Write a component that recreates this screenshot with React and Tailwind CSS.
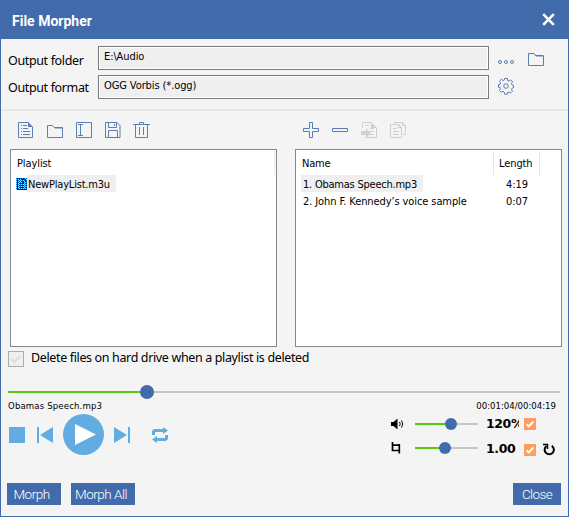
import React, { useState } from 'react';

const IconButton = ({ title, className = '', children }) => (
  <button title={title} className={`block shrink-0 ${className}`}>
    {children}
  </button>
);

const Svg = ({ w = 16, h = 16, color = '#5b7db5', children }) => (
  <svg
    width={w}
    height={h}
    viewBox={`0 0 ${w} ${h}`}
    fill="none"
    stroke={color}
    strokeWidth="1"
    className="block overflow-visible"
  >
    {children}
  </svg>
);

const FolderIcon = () => (
  <Svg w={16} h={14}>
    <path d="M.5 13.5V1.5h5.5l2 2.5h7.5v9.5zM6.5 2.5l1 1h8M8 3.500h7" />
  </Svg>
);

const ToolFolderIcon = () => (
  <Svg>
    <path d="M.5 15.5V3.5h5l2.5 2.5h7.5v9.5zM7 5.5h8.500v2" />
  </Svg>
);

const PlaylistIcon = () => (
  <Svg>
    <path d="M10.5 .5H.5v15h14V5" />
    <path d="M10 0l5 5h-5z" fill="#5b7db5" stroke="none" />
    <path d="M3 3.5h1M5 3.5h4M3 6.5h1M5 6.5h5M3 9.5h1M5 9.5h7M3 12.5h1M5 12.5h7" />
  </Svg>
);

const RenameIcon = () => (
  <Svg>
    <path d="M.5 .5h15v15H.5zM2 2.5h5M2 13.5h5M4.5 2.5v11" />
  </Svg>
);

const SaveIcon = () => (
  <Svg>
    <path d="M.5 .5h11.500l3 3v12H.5zM3.500 .5v5h8v-5M9.500 2v2M3.500 15.500v-7h9v7" />
  </Svg>
);

const TrashIcon = () => (
  <Svg w={17}>
    <path d="M0 2.5h17M6.5 2.500v-2h4v2M2.500 2.500v13h12v-13M6.500 5v8M10.500 5v8" />
  </Svg>
);

const PlusIcon = () => (
  <Svg>
    <path d="M6.500 .5h3v6h6v3h-6v6h-3v-6h-6v-3h6z" />
  </Svg>
);

const MinusIcon = () => (
  <Svg>
    <path d="M.5 6.500h15v3H.5z" />
  </Svg>
);

const ImportIcon = () => (
  <Svg color="#d0d0d0">
    <path d="M1.500 6V.5h9M4 15.500h11.500V5.500M4 3.500h4M9 6.500h4M9 9.500h4M9 12.500h4" />
    <path d="M10 0l6 6h-6z" fill="#d0d0d0" stroke="none" />
    <path d="M0 9h5V6l5 5-5 5v-3H0z" fill="#d0d0d0" stroke="none" />
  </Svg>
);

const CopyIcon = () => (
  <Svg color="#d0d0d0">
    <path d="M4.500 2V.5h8l3 3v9H13M12.500 .5v3h3M.5 2.500h8l3 3v10H.5zM8.500 2.500v3h3M3 6.500h4M3 9.500h6M3 12.500h6" />
  </Svg>
);

const GearIcon = () => (
  <Svg>
    <circle cx="8" cy="8" r="2.300" />
    <path d="M6.500.5h3v2l1.500.7 1.700-1.300 1.900 1.900-1.200 1.700.7 1.500 1.400.2v2.600l-1.500.4-.6 1.300 1.200 1.700-1.900 1.900-1.700-1.200-1.500.6v1.700h-3v-1.700L5 13.200l-1.700 1.200-1.900-1.900 1.200-1.700-.6-1.300L.5 9.200V6.600L2 6.400l.7-1.600-1.300-1.600 1.900-1.900L5 2.500l1.500-.6z" />
  </Svg>
);

const Field = ({ label, value, labelClass }) => (
  <div className="flex h-6">
    <label className={`w-[91px] shrink-0 pl-px font-['Noto_Sans'] text-[12.5px] leading-[17px] tracking-[-0.36px] whitespace-nowrap text-black ${labelClass}`}>
      {label}
    </label>
    <div className="w-[391px] border border-[#7b7b7b] bg-[#efefef] pl-[5px] text-[11px] leading-[20px] tracking-[-0.1px] shadow-[inset_0_0_0_1px_#fff]">
      {value}
    </div>
  </div>
);

const MiniSlider = ({ value }) => (
  <div className="relative flex h-3 w-[63px] shrink-0 items-center">
    <div className="h-[2px] w-full bg-[#c5c5c5]">
      <div className="h-full bg-[#5acb0c]" style={{ width: value }} />
    </div>
    <div className="absolute top-0 size-3 -translate-x-1/2 rounded-full bg-[#426bab]" style={{ left: value }} />
  </div>
);

const OrangeCheck = () => (
  <div className="flex size-3 shrink-0 items-center justify-center bg-[#ff9c5f]">
    <svg width="12" height="12" viewBox="0 0 12 12" fill="none" stroke="#fff" strokeWidth="2">
      <path d="M2.500 6.300l2.300 2.200 4.500-5" />
    </svg>
  </div>
);

const tracks = [
  { name: '1. Obamas Speech.mp3', length: '4:19', spacing: 'tracking-[-0.23px]' },
  { name: '2. John F. Kennedy’s voice sample', length: '0:07', spacing: 'tracking-[-0.1px]' },
];

const App = () => {
  const [selected, setSelected] = useState(0);

  return (
    <div className="flex h-[517px] w-[569px] flex-col overflow-hidden border-x border-b border-[#426bab] bg-[#f4f4f4] font-['DejaVu_Sans_Condensed','DejaVu_Sans',sans-serif] text-black">
      {/* Title bar */}
      <div className="flex h-[39px] shrink-0 items-center justify-between bg-[#426bab] pr-[13px] pl-[11px]">
        <h1 className="pt-[3px] font-[Roboto] text-[14px] font-bold text-white">File Morpher</h1>
        <button title="Close window">
          <svg width="13" height="13" viewBox="0 0 13 13" stroke="#fff" strokeWidth="2.600" className="block">
            <path d="M1.200 1.200l10.600 10.600M11.800 1.200L1.200 11.800" />
          </svg>
        </button>
      </div>

      {/* Output settings */}
      <div className="flex h-[70px] shrink-0 pt-[7px] pl-[6px]">
        <div className="flex flex-col gap-[5px]">
          <Field label="Output folder" value={'E:\\Audio'} labelClass="pt-[6px]" />
          <Field label="Output format" value="OGG Vorbis (*.ogg)" labelClass="pt-[4px]" />
        </div>
        <div className="ml-[9px] flex flex-col gap-[13px] pt-[6px]">
          <div className="flex gap-[14px]">
            <IconButton title="Browse">
              <Svg w={16} h={14}>
                <circle cx="2" cy="10" r="1.500" />
                <circle cx="8" cy="10" r="1.500" />
                <circle cx="14" cy="10" r="1.500" />
              </Svg>
            </IconButton>
            <IconButton title="Open folder">
              <FolderIcon />
            </IconButton>
          </div>
          <IconButton title="Settings" className="-mt-px w-4">
            <GearIcon />
          </IconButton>
        </div>
      </div>
      <div className="h-[2px] shrink-0 bg-[#e7e7e7]" />

      {/* Lists */}
      <div className="flex shrink-0 gap-[18px] pt-[11px] pl-[9px]">
        <div className="w-[267px]">
          <div className="flex h-[27px] items-start gap-[13px] pl-2">
            <IconButton title="New playlist"><PlaylistIcon /></IconButton>
            <IconButton title="Open playlist"><ToolFolderIcon /></IconButton>
            <IconButton title="Rename"><RenameIcon /></IconButton>
            <IconButton title="Save"><SaveIcon /></IconButton>
            <IconButton title="Delete" className="-ml-px"><TrashIcon /></IconButton>
          </div>
          <div className="h-[198px] border border-[#828790] bg-white pt-px text-[11px]">
            <div className="mr-px h-[24px] border-r border-[#e5e5e5] pl-[6px] leading-[25px] tracking-[-0.1px]">Playlist</div>
            <div className="flex h-[17px] items-center pl-[5px]">
              <svg width="11" height="12" viewBox="0 0 11 12" className="shrink-0" shapeRendering="crispEdges">
                <defs>
                  <pattern id="dither" width="2" height="2" patternUnits="userSpaceOnUse">
                    <path d="M0 0h1v1H0z" fill="#0078d7" />
                    <path d="M1 1h1v1H1z" fill="#101c28" />
                  </pattern>
                </defs>
                <path d="M0 0h11v12H0z" fill="#bcd3e4" />
                <path d="M1 0h6l3 3v8H1zM6 1v3h3M3 5h5M3 7h5M3 9h5" fill="none" stroke="#17222c" />
                <path d="M0 0h11v12H0z" fill="url(#dither)" />
              </svg>
              <div className="h-[17px] w-[89px] bg-[#efefef] pl-px leading-[19px] tracking-[-0.2px] whitespace-nowrap">
                NewPlayList.m3u
              </div>
            </div>
          </div>
        </div>

        <div className="w-[267px]">
          <div className="flex h-[27px] items-start gap-[13px] pl-2">
            <IconButton title="Add"><PlusIcon /></IconButton>
            <IconButton title="Remove"><MinusIcon /></IconButton>
            <IconButton title="Import"><ImportIcon /></IconButton>
            <IconButton title="Copy"><CopyIcon /></IconButton>
          </div>
          <div className="h-[198px] border border-[#828790] bg-white pt-px text-[11px]">
            <div className="flex h-[24px] leading-[25px]">
              <div className="w-[198px] border-r border-[#e5e5e5] pl-[6px] tracking-[-0.2px]">Name</div>
              <div className="w-[46px] border-r border-[#e5e5e5] pl-[5px] tracking-[-0.1px]">Length</div>
            </div>
            {tracks.map((track, i) => (
              <div key={track.name} className="flex h-[17px] leading-[19px] whitespace-nowrap" onClick={() => setSelected(i)}>
                <div className="w-[198px] pl-[5px]">
                  <div className={`h-[17px] w-fit pr-[6px] pl-[2px] ${track.spacing} ${selected === i ? 'bg-[#efefef]' : ''}`}>
                    {track.name}
                  </div>
                </div>
                <div className="w-[46px] text-center">{track.length}</div>
              </div>
            ))}
          </div>
        </div>
      </div>

      {/* Delete option */}
      <div className="flex h-[24px] shrink-0 pt-1 pl-[7px]">
        <div className="flex size-4 items-center justify-center border border-[#adadad] bg-[#efefef]">
          <svg width="12" height="12" viewBox="0 0 12 12" fill="none" stroke="#dedede" strokeWidth="2">
            <path d="M1.500 6l3 3 6-6.500" />
          </svg>
        </div>
        <span className="ml-[7px] font-['Noto_Sans'] text-[12.5px] leading-[14px] tracking-[-0.36px] whitespace-nowrap">
          Delete files on hard drive when a playlist is deleted
        </span>
      </div>

      {/* Seek bar */}
      <div className="relative mt-[14px] ml-[7px] h-[14px] w-[552px] shrink-0">
        <div className="mt-[6px] h-[2px] bg-[#c5c5c5]">
          <div className="h-full w-[139px] bg-[#5acb0c]" />
        </div>
        <div className="absolute top-0 left-[132px] size-[14px] rounded-full bg-[#426bab]" />
      </div>
      <div className="flex h-[15px] shrink-0 justify-between pr-[12px] pl-[7px] text-[9.500px] leading-[14px] whitespace-nowrap">
        <span className="tracking-[0.15px]">Obamas Speech.mp3</span>
        <span>00:01:04/00:04:19</span>
      </div>

      {/* Player */}
      <div className="flex h-[69px] shrink-0 items-start justify-between pl-2">
        <div className="flex h-[41px] items-center">
          <button title="Stop" className="size-4 bg-[#62ace1]" />
          <IconButton title="Previous" className="ml-3">
            <svg width="16" height="16" fill="#62ace1" className="block"><path d="M0 0h2v16H0zM16 0v16L3 8z" /></svg>
          </IconButton>
          <button title="Play" className="ml-[10px] size-[41px] rounded-full bg-[#62ace1]">
            <svg width="41" height="41" fill="#fff"><path d="M12 10v21l21-10.500z" /></svg>
          </button>
          <IconButton title="Next" className="ml-[10px]">
            <svg width="16" height="16" fill="#62ace1" className="block"><path d="M14 0h2v16h-2zM0 0v16L13 8z" /></svg>
          </IconButton>
          <IconButton title="Repeat" className="ml-[22px]">
            <svg width="16" height="16" fill="#62ace1" className="block">
              <path d="M0 8V4l2-2h9V0l5 3.500L11 7V5H3v3zM16 8v4l-2 2H5v2l-5-3.500L5 9v2h8V8z" />
            </svg>
          </IconButton>
        </div>

        <div className="flex w-[177px] flex-col gap-[6px] pt-px">
          <div className="flex h-[18px] items-center">
            <svg width="13" height="12" viewBox="0 0 13 12" className="shrink-0" fill="none" stroke="#000">
              <path d="M0 4h2.500L6.500.5v11L2.500 8H0z" fill="#000" stroke="none" />
              <path d="M8.500 4q1.500 2 0 4M10.500 2.500q2.500 3.500 0 7" />
            </svg>
            <div className="ml-[11px]"><MiniSlider value="36px" /></div>
            <span className="ml-2 w-[33px] shrink-0 overflow-hidden font-['DejaVu_Sans'] text-[12.500px] leading-[18px] font-bold tracking-[-0.4px]">120%</span>
            <div className="ml-[5px]"><OrangeCheck /></div>
          </div>
          <div className="flex h-[18px] items-center">
            <svg width="13" height="12" viewBox="0 0 13 12" className="shrink-0" fill="none" stroke="#000" strokeWidth="1.700">
              <path d="M1.500 0v8.500h6.500M1.500 3.200h6.700M8.300 2v9.500" />
            </svg>
            <div className="ml-[11px]"><MiniSlider value="30px" /></div>
            <span className="ml-2 w-[33px] shrink-0 pt-px font-['DejaVu_Sans'] text-[12.500px] leading-[18px] font-bold tracking-[-0.4px]">1.00</span>
            <div className="ml-[5px] pt-[4px]"><OrangeCheck /></div>
            <svg width="12" height="13" viewBox="0 0 12 13" className="mt-[3px] ml-[7px] shrink-0" fill="none" stroke="#000" strokeWidth="2">
              <path d="M3.500 3a4.600 4.600 0 1 0 5.200-.2" />
              <path d="M0 1.500h4.500v4.500" strokeWidth="1.500" />
            </svg>
          </div>
        </div>
      </div>

      {/* Actions */}
      <div className="flex shrink-0 pr-[7px] pl-[6px] font-[Roboto] text-[13.500px] tracking-[-0.5px] text-white">
        <button className="h-[22px] w-[54px] bg-[#426bab] pt-px pr-[5px] font-light">Morph</button>
        <button className="ml-[10px] h-[22px] w-[64px] bg-[#426bab] pt-px pr-1 font-light whitespace-nowrap">Morph All</button>
        <button className="ml-auto h-[22px] w-[48px] bg-[#426bab] pt-px font-light tracking-[-0.6px]">Close</button>
      </div>
    </div>
  );
};

export default App;
